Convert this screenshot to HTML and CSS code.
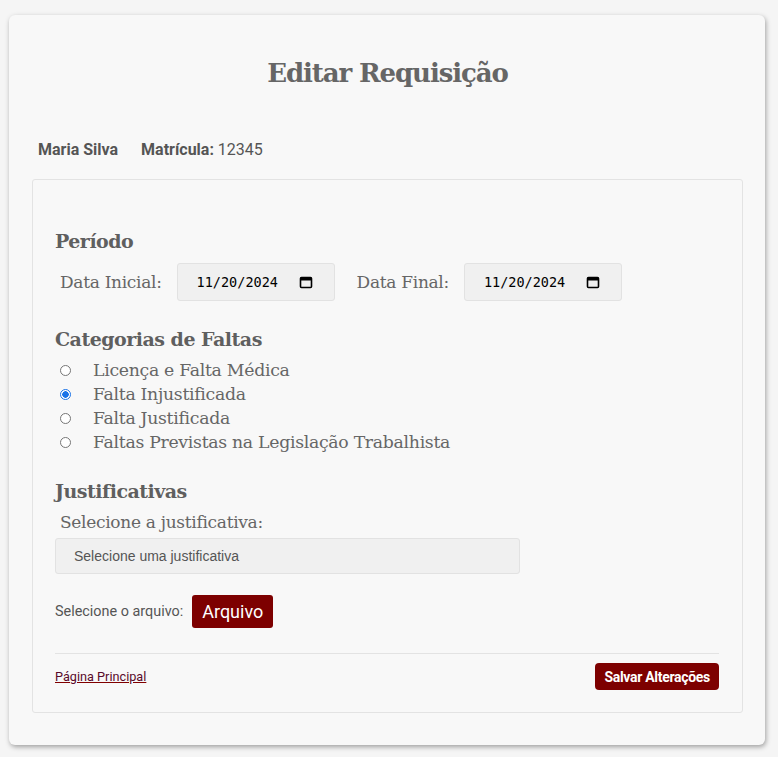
FILE: index.html
```html
<!DOCTYPE html>
<html lang="pt-BR">
<head>
<meta charset="utf-8">
<title>Editar Requisição</title>
<link rel="stylesheet" href="styles.css">
</head>
<body>
<main class="card">
  <h1 class="title">Editar Requisição</h1>
  <div class="user">
    <span class="user-name">Maria Silva</span>
    <span class="user-mat"><b>Matrícula:</b> 12345</span>
  </div>
  <section class="panel">
    <h2 class="sec">Período</h2>
    <div class="dates">
      <label class="lbl">Data Inicial:</label>
      <div class="date"><span>11/20/2024</span><svg width="14" height="14" viewBox="0 0 14 14"><rect x="1.5" y="2.5" width="11" height="10" rx="1" fill="none" stroke="#000" stroke-width="1.6"/><rect x="1.5" y="2.5" width="11" height="3" fill="#000"/></svg></div>
      <label class="lbl lbl2">Data Final:</label>
      <div class="date"><span>11/20/2024</span><svg width="14" height="14" viewBox="0 0 14 14"><rect x="1.5" y="2.5" width="11" height="10" rx="1" fill="none" stroke="#000" stroke-width="1.6"/><rect x="1.5" y="2.5" width="11" height="3" fill="#000"/></svg></div>
    </div>
    <h2 class="sec sec-cat">Categorias de Faltas</h2>
    <ul class="radios">
      <li><span class="radio"></span>Licença e Falta Médica</li>
      <li><span class="radio on"></span>Falta Injustificada</li>
      <li><span class="radio"></span>Falta Justificada</li>
      <li><span class="radio"></span>Faltas Previstas na Legislação Trabalhista</li>
    </ul>
    <h2 class="sec sec-just">Justificativas</h2>
    <p class="lbl lbl-just">Selecione a justificativa:</p>
    <div class="select">Selecione uma justificativa</div>
    <div class="file">
      <span class="file-lbl">Selecione o arquivo:</span>
      <span class="btn-file">Arquivo</span>
    </div>
    <div class="footer">
      <a class="home" href="#">Página Principal</a>
      <span class="btn-save">Salvar Alterações</span>
    </div>
  </section>
</main>
</body>
</html>
```
FILE: styles.css
```css
html, body { margin: 0; padding: 0; }
body {
  background: #f5f5f5;
  padding: 15px 13px 12px 9px;
  font-family: Roboto, "Liberation Sans", sans-serif;
  color: #5f5f5f;
}
.card {
  background: #f8f8f8;
  border-radius: 6px;
  box-shadow: 1px 2px 5px rgba(0,0,0,0.35);
  padding: 40px 22px 32px 23px;
  height: 658px;
}
.title {
  margin: 0;
  text-align: center;
  font-family: "DejaVu Serif", serif;
  font-size: 26px;
  font-weight: bold;
  color: #666;
  line-height: 36px;
  letter-spacing: -1.1px;
}
.user {
  margin-top: 49px;
  padding-left: 6px;
  font-size: 16px;
  line-height: 20px;
  color: #555;
  display: flex;
  gap: 23px;
}
.user-name { font-weight: bold; }
.user-mat b { font-weight: bold; }
.panel {
  margin-top: 19px;
  border: 1px solid #e3e3e3;
  border-radius: 3px;
  padding: 48px 23px 0 22px;
  height: 484px;
}
.sec {
  margin: 0;
  font-family: "DejaVu Serif", serif;
  font-size: 19px;
  font-weight: bold;
  color: #5f5f5f;
  line-height: 26px;
  letter-spacing: -0.5px;
}
.dates {
  display: flex;
  align-items: center;
  margin-top: 9px;
}
.lbl {
  font-family: "DejaVu Serif", serif;
  font-size: 17px;
  color: #666;
  margin: 0;
  padding-left: 5px;
  letter-spacing: -0.3px;
}
.lbl2 { margin-left: 22px; padding-left: 0; }
.date {
  margin-left: 15px;
  width: 158px;
  height: 38px;
  box-sizing: border-box;
  background: #f0f0f0;
  border: 1px solid #e2e2e2;
  border-radius: 3px;
  display: flex;
  align-items: center;
  padding-left: 19px;
  gap: 21px;
  font-family: "DejaVu Sans Mono", "Liberation Mono", monospace;
  font-size: 13.5px;
  color: #000;
}
.date svg { flex: none; }
.sec-cat { margin-top: 25px; }
.radios {
  list-style: none;
  margin: 6px 0 0;
  padding: 0 0 0 5px;
}
.radios li {
  display: flex;
  align-items: center;
  height: 24px;
  font-family: "DejaVu Serif", serif;
  font-size: 17.3px;
  color: #666;
  letter-spacing: -0.3px;
}
.radio {
  width: 11px;
  height: 11px;
  box-sizing: border-box;
  border: 1px solid #767676;
  border-radius: 50%;
  background: #fff;
  margin-right: 22px;
  flex: none;
}
.radio.on {
  border: 1px solid #1a73e8;
  background: radial-gradient(circle, #1a73e8 0 3px, #fff 3.5px);
}
.sec-just { margin-top: 24px; }
.lbl-just { margin-top: 6px; line-height: 24px; }
.select {
  margin-top: 4px;
  width: 465px;
  height: 36px;
  box-sizing: border-box;
  background: #f0f0f0;
  border: 1px solid #e2e2e2;
  border-radius: 3px;
  padding-left: 18px;
  display: flex;
  align-items: center;
  font-family: "Liberation Sans", Arial, sans-serif;
  font-size: 14px;
  color: #555;
}
.file {
  margin-top: 21px;
  display: flex;
  align-items: center;
  gap: 9px;
}
.file-lbl {
  font-size: 14.4px;
  color: #555;
}
.btn-file {
  background: #7d0000;
  color: #fff;
  border-radius: 3px;
  font-size: 18px;
  height: 33px;
  padding: 0 10px;
  display: flex;
  align-items: center;
}
.footer {
  margin-top: 25px;
  border-top: 1px solid #e3e3e3;
  padding-top: 9px;
  display: flex;
  justify-content: space-between;
  align-items: center;
}
.home {
  font-size: 12.7px;
  color: #5a0a2a;
  text-decoration: underline;
  text-decoration-color: #800000;
}
.btn-save {
  background: #7d0000;
  color: #fff;
  font-weight: bold;
  font-size: 14px;
  height: 27px;
  padding: 0 9px;
  border-radius: 4px;
  display: flex;
  align-items: center;
  letter-spacing: -0.3px;
}
```
